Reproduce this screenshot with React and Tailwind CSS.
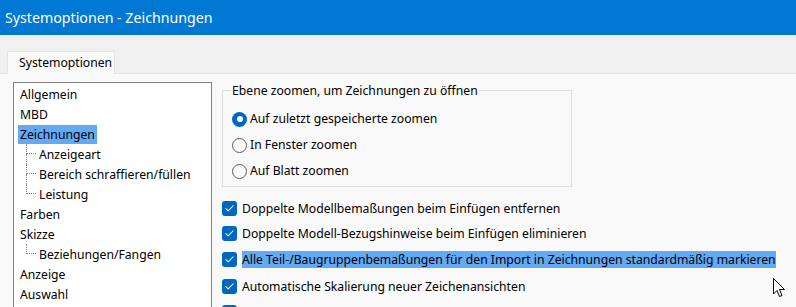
import { Check } from "lucide-react"

const font = { fontFamily: '"Noto Sans", "Open Sans", sans-serif' }

const tree = [
  { label: "Allgemein" },
  { label: "MBD" },
  { label: "Zeichnungen", selected: true },
  { label: "Anzeigeart", child: true },
  { label: "Bereich schraffieren/füllen", child: true },
  { label: "Leistung", child: true, last: true },
  { label: "Farben" },
  { label: "Skizze" },
  { label: "Beziehungen/Fangen", child: true, last: true },
  { label: "Anzeige" },
  { label: "Auswahl" },
]

const radios = [
  { label: "Auf zuletzt gespeicherte zoomen", on: true },
  { label: "In Fenster zoomen" },
  { label: "Auf Blatt zoomen" },
]

const checks = [
  { label: "Doppelte Modellbemaßungen beim Einfügen entfernen", h: "h-[25px]" },
  { label: "Doppelte Modell-Bezugshinweise beim Einfügen eliminieren", h: "h-[25px]" },
  { label: "Alle Teil-/Baugruppenbemaßungen für den Import in Zeichnungen standardmäßig markieren", h: "h-[26px]", hi: true },
  { label: "Automatische Skalierung neuer Zeichenansichten", h: "h-[28px]" },
  { label: "", h: "h-[25px]" },
]

function TreeRow({ item }) {
  return (
    <div className="flex h-5 items-center">
      {item.child && (
        <div className="flex h-5 w-[19px] shrink-0">
          <div className="w-[8px]" />
          <div className="flex w-[10px] flex-col">
            <div className="h-1/2 border-b border-l border-dotted border-[#8a8a8a]" />
            {!item.last && <div className="h-1/2 border-l border-dotted border-[#8a8a8a]" />}
          </div>
        </div>
      )}
      <span className={`px-[2px] leading-[19px] ${item.selected ? "bg-[#62aaf6]" : ""}`}>{item.label}</span>
    </div>
  )
}

function Radio({ on }) {
  if (on)
    return (
      <div className="flex h-[15px] w-[15px] shrink-0 items-center justify-center rounded-full bg-[#0067c0]">
        <div className="h-[6px] w-[6px] rounded-full bg-white" />
      </div>
    )
  return <div className="h-[15px] w-[15px] shrink-0 rounded-full border border-[#5a5a5a] bg-[#fbfbfb]" />
}

export default function App() {
  return (
    <div className="relative h-[307px] w-[796px] overflow-hidden bg-[#f0f0f0] text-[12.2px] text-black" style={font}>
      <div className="flex h-[35px] items-center bg-[#0078d4] pl-[5px] text-[14.2px] text-white">
        Systemoptionen - Zeichnungen
      </div>

      <div className="flex pl-[7px] pt-[16px]">
        <div className="-mb-px flex h-[23px] w-[108px] items-center border border-b-0 border-[#e3e3e3] bg-[#f9f9f9] pl-[11px]">
          Systemoptionen
        </div>
      </div>

      <div className="flex h-[300px] gap-[10px] border-t border-[#e3e3e3] bg-[#f9f9f9] pl-[13px] pt-[8px]">
        <div className="h-[260px] w-[199px] shrink-0 border border-[#828282] bg-white pl-[4px] pt-[1px]">
          {tree.map((item, i) => (
            <TreeRow key={i} item={item} />
          ))}
        </div>

        <div className="flex flex-col">
          <div className="relative mt-[8px] h-[97px] w-[350px] border border-[#dcdcdc] pl-[9px] pt-[14px]">
            <span className="absolute -top-[9px] left-[8px] bg-[#f9f9f9] px-[1px]">
              Ebene zoomen, um Zeichnungen zu öffnen
            </span>
            <div className="h-[1px]" />
            {radios.map((r, i) => (
              <div key={i} className="flex h-[26px] items-center gap-[3px]">
                <Radio on={r.on} />
                <span>{r.label}</span>
              </div>
            ))}
          </div>

          <div className="mt-[9px] flex flex-col">
            {checks.map((c, i) => (
              <div key={i} className={`flex ${c.h} items-center gap-[5px]`}>
                <div className="flex h-[15px] w-[15px] shrink-0 items-center justify-center rounded-[3px] bg-[#0067c0]">
                  <Check className="h-[11px] w-[11px] text-white" strokeWidth={2.25} />
                </div>
                {c.label && (
                  <span className={`whitespace-nowrap leading-[17px] ${c.hi ? "bg-[#62aaf6]" : ""}`}>{c.label}</span>
                )}
              </div>
            ))}
          </div>
        </div>
      </div>

      {/* mouse pointer */}
      <svg className="absolute left-[773px] top-[278px]" width="13" height="20" viewBox="0 0 13 20">
        <path d="M0.5 0.5 L0.5 16 L4 12.5 L6.5 18.5 L9 17.5 L6.5 11.5 L11.5 11.5 Z" fill="white" stroke="black" strokeWidth="1" strokeLinejoin="miter" />
      </svg>
    </div>
  )
}
